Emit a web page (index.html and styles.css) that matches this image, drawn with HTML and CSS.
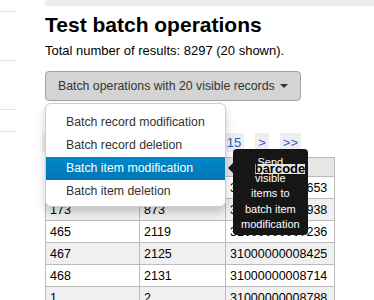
FILE: index.html
```html
<!DOCTYPE html>
<html>
<head>
<meta charset="utf-8">
<link rel="stylesheet" href="styles.css">
</head>
<body>
<nav class="sidebar">
  <div class="side-item side-top"></div>
  <div class="side-item side-tall"></div>
  <div class="side-item side-tall"></div>
  <div class="side-item side-short"></div>
</nav>
<main class="main">
  <div class="band"></div>
  <h1 class="title">Test batch operations</h1>
  <p class="intro">Total number of results: 8297 (20 shown).</p>
  <div class="dropdown">
    <button class="btn"><span class="btn-label">Batch operations with 20 visible records</span><span class="caret"></span></button>
    <ul class="menu">
      <li class="menu-item">Batch record modification</li>
      <li class="menu-item">Batch record deletion</li>
      <li class="menu-item active">Batch item modification</li>
      <li class="menu-item">Batch item deletion</li>
    </ul>
  </div>
  <div class="pager">
    <a class="page">&lt;&lt;</a>
    <a class="page">&lt;</a>
    <a class="page">11</a>
    <a class="page">12</a>
    <a class="page">13</a>
    <a class="page">14</a>
    <a class="page">15</a>
    <a class="page">&gt;</a>
    <a class="page">&gt;&gt;</a>
  </div>
  <table class="results">
    <colgroup><col class="c1"><col class="c2"><col class="c3"></colgroup>
    <thead>
      <tr><th>itemnumber</th><th>biblionumber</th><th><span class="th-label">barcode</span></th></tr>
    </thead>
    <tbody>
      <tr><td>172</td><td>869</td><td>31000000004653</td></tr>
      <tr><td>173</td><td>873</td><td>31000000004938</td></tr>
      <tr><td>465</td><td>2119</td><td>31000000007236</td></tr>
      <tr><td>467</td><td>2125</td><td>31000000008425</td></tr>
      <tr><td>468</td><td>2131</td><td>31000000008714</td></tr>
      <tr><td>1</td><td>2</td><td>31000000008788</td></tr>
    </tbody>
  </table>
  <div class="tooltip">
    <span class="tooltip-arrow"></span>
    <div class="tooltip-inner">Send<br>visible<br>items to<br>batch item<br>modification</div>
  </div>
</main>
</body>
</html>
```

FILE: styles.css
```css
* { box-sizing: border-box; }
html, body { margin: 0; padding: 0; background: #fff; }
body {
  display: flex;
  font-family: "Liberation Sans", Arial, sans-serif;
  color: #000;
  overflow: hidden;
  height: 300px;
}
.sidebar { width: 15px; flex: none; }
.side-item { border-bottom: 1px dotted #c8c8c8; }
.side-top { height: 12px; }
.side-tall { height: 49px; }
.side-short { height: 22px; }

.main { position: relative; margin-left: 30px; flex: 1; }
.band { height: 6px; background: #e8eef0; }
.title {
  margin: 7px 0 0;
  font-size: 21px;
  line-height: 24px;
  font-weight: bold;
}
.intro {
  margin: 6px 0 0;
  font-size: 13px;
  line-height: 16px;
}
.dropdown { position: relative; margin-top: 12px; width: 256px; }
.btn {
  display: flex;
  align-items: center;
  height: 30px;
  width: 256px;
  padding: 0 12px;
  background: #d4d4d4;
  border: 1px solid #a2a2a2;
  border-radius: 4px;
  font-family: inherit;
  font-size: 12.3px;
  color: #333;
}
.caret {
  margin-left: 5px;
  width: 0; height: 0;
  border-top: 4px solid #333;
  border-left: 4px solid transparent;
  border-right: 4px solid transparent;
}
.menu {
  position: absolute;
  z-index: 5;
  top: 100%;
  left: 0;
  margin: 2px 0 0;
  padding: 7px 0 3px;
  width: 181px;
  list-style: none;
  background: #fff;
  border: 1px solid #cfcfcf;
  border-radius: 6px;
  box-shadow: 0 5px 10px rgba(0,0,0,0.2);
}
.menu-item {
  padding: 0 20px;
  font-size: 12.3px;
  line-height: 23px;
  color: #333;
  white-space: nowrap;
}
.menu-item.active {
  color: #fff;
  background: linear-gradient(#0088cc, #0077b3);
}

.pager {
  display: flex;
  justify-content: flex-end;
  gap: 11px;
  width: 256px;
  margin-top: 32px;
  margin-bottom: 5px;
}
.page {
  padding: 0 3px;
  line-height: 19px;
  font-size: 13px;
  background: #eeeeee;
  color: #2a5bd7;
}

.results {
  border-collapse: collapse;
  table-layout: fixed;
  width: 289px;
  font-size: 12.5px;
}
.c1 { width: 94px; }
.c2 { width: 86px; }
.c3 { width: 109px; }
.results th, .results td {
  border: 1px solid #bbb;
  padding: 0 4px;
  text-align: left;
  white-space: nowrap;
  overflow: hidden;
  line-height: 14px;
}
.results th {
  height: 19px;
  padding-top: 3px;
  background: #e6e6e6;
  font-size: 13px;
  text-align: center;
}
.results td { height: 22px; }
.results tbody tr:nth-child(even) td { background: #f0f0f0; }
.th-label {
  position: relative;
  z-index: 11;
  background: #e6e6e6;
  line-height: 10px;
  display: inline-block;
}

.tooltip {
  position: absolute;
  z-index: 10;
  left: 188px;
  top: 149px;
}
.tooltip-inner {
  padding: 6px 8px 2px;
  background: #161616;
  color: #fff;
  border-radius: 4px;
  font-size: 11px;
  line-height: 15.5px;
  text-align: center;
  white-space: nowrap;
}
.tooltip-arrow {
  position: absolute;
  left: -5px;
  top: 14px;
  width: 0; height: 0;
  border-top: 5px solid transparent;
  border-bottom: 5px solid transparent;
  border-right: 5px solid #161616;
}
```
